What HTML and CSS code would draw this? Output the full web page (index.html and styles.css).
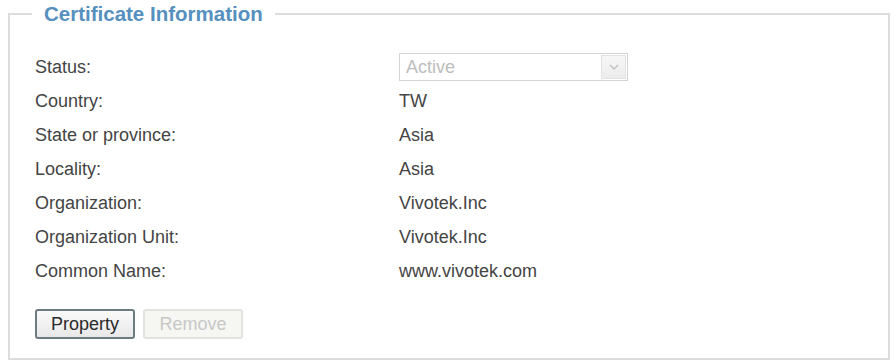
FILE: index.html
```html
<!DOCTYPE html>
<html lang="en">
<head>
    <meta charset="UTF-8">
    <meta name="viewport" content="width=device-width, initial-scale=1.0">
    <title>Certificate Information</title>
    <link rel="stylesheet" href="styles.css">
</head>
<body>
    <fieldset class="cert-box">
        <legend>Certificate Information</legend>
        <div class="cert-body">
            <div class="cert-grid">
                <div class="label">Status:</div>
                <div class="value">
                    <div class="select-box">
                        <span class="select-text">Active</span>
                        <span class="select-arrow">
                            <svg width="10" height="6" viewBox="0 0 10 6"><path d="M1 1 L5 5 L9 1" fill="none" stroke="#c4c4c4" stroke-width="1.5"/></svg>
                        </span>
                    </div>
                </div>
                <div class="label">Country:</div>
                <div class="value">TW</div>
                <div class="label">State or province:</div>
                <div class="value">Asia</div>
                <div class="label">Locality:</div>
                <div class="value">Asia</div>
                <div class="label">Organization:</div>
                <div class="value">Vivotek.Inc</div>
                <div class="label">Organization Unit:</div>
                <div class="value">Vivotek.Inc</div>
                <div class="label">Common Name:</div>
                <div class="value">www.vivotek.com</div>
            </div>
            <div class="buttons">
                <button type="button" class="btn">Property</button>
                <button type="button" class="btn" disabled>Remove</button>
            </div>
        </div>
    </fieldset>
</body>
</html>
```

FILE: styles.css
```css
body {
    margin: 0;
    padding: 2px 6px 0 8px;
    font-family: "Liberation Sans", Arial, sans-serif;
    font-size: 18px;
    color: #444;
    background: #fff;
}
.cert-box {
    margin: 0;
    border: 2px solid #dcdcdc;
    padding: 24px 0 19px 0;
}
.cert-box legend {
    margin-left: 22px;
    padding: 0 12px;
    font-size: 20.5px;
    font-weight: bold;
    line-height: 24px;
    color: #5590bf;
}
.cert-body {
    padding-left: 25px;
}
.cert-grid {
    display: grid;
    grid-template-columns: 364px 1fr;
    grid-auto-rows: 34px;
    align-items: center;
}
.select-box {
    display: flex;
    align-items: center;
    width: 227px;
    height: 26px;
    border: 1px solid #d4d4d4;
    background: #fff;
}
.select-text {
    flex: 1;
    padding-left: 6px;
    color: #bdbdbd;
}
.select-arrow {
    display: flex;
    align-items: center;
    justify-content: center;
    width: 25px;
    height: 24px;
    margin-right: 1px;
    border: 1px solid #e2e2e2;
    background: linear-gradient(#f7f7f7, #ececec);
    box-sizing: border-box;
}
.buttons {
    display: flex;
    gap: 8px;
    margin-top: 21px;
}
.btn {
    height: 30px;
    width: 100px;
    padding: 0;
    font-family: inherit;
    font-size: 18px;
    color: #2a2a2a;
    background: linear-gradient(#fafafa, #e8e8e8);
    border: 2px solid #6e7a82;
    border-radius: 3px;
}
.btn:disabled {
    color: #c8c8c8;
    background: #f6f6f3;
    border-color: #e2e2de;
}
```
